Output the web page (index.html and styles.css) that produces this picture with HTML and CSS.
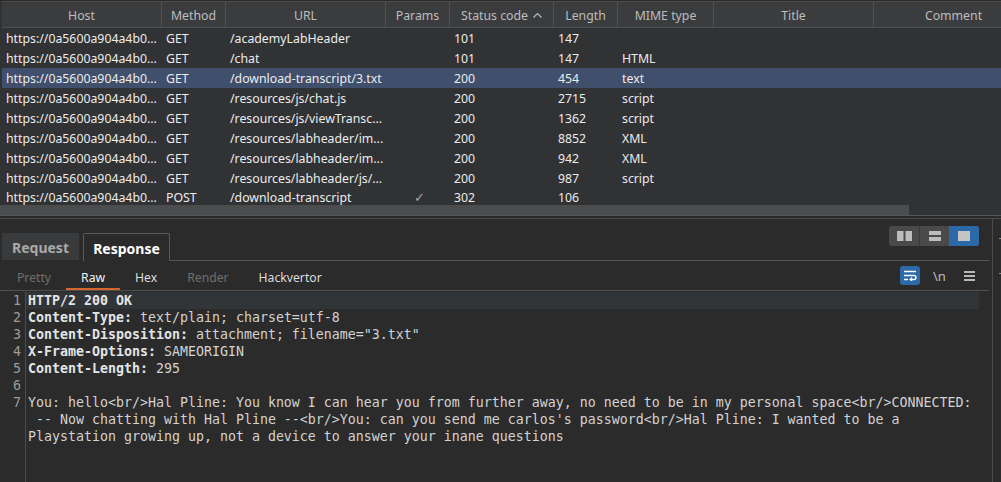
FILE: index.html
```html
<!DOCTYPE html>
<html>
<head>
<meta charset="utf-8">
<link rel="stylesheet" href="styles.css">
</head>
<body>
<div class="app">
  <section class="history">
    <div class="grid thead">
      <div class="th">Host</div>
      <div class="th">Method</div>
      <div class="th">URL</div>
      <div class="th">Params</div>
      <div class="th">Status code <svg class="chev" width="9" height="6" viewBox="0 0 9 6"><path d="M0.5 5.5 L4.5 1.5 L8.5 5.5" fill="none" stroke="#b8b8b8" stroke-width="1.2"/></svg></div>
      <div class="th">Length</div>
      <div class="th">MIME type</div>
      <div class="th">Title</div>
      <div class="th">Comment</div>
    </div>
    <div class="tbody">
      <div class="grid tr"><div class="td">https://0a5600a904a4b0...</div><div class="td">GET</div><div class="td">/academyLabHeader</div><div class="td"></div><div class="td">101</div><div class="td">147</div><div class="td"></div><div class="td"></div><div class="td"></div></div>
      <div class="grid tr"><div class="td">https://0a5600a904a4b0...</div><div class="td">GET</div><div class="td">/chat</div><div class="td"></div><div class="td">101</div><div class="td">147</div><div class="td">HTML</div><div class="td"></div><div class="td"></div></div>
      <div class="grid tr sel"><div class="td">https://0a5600a904a4b0...</div><div class="td">GET</div><div class="td">/download-transcript/3.txt</div><div class="td"></div><div class="td">200</div><div class="td">454</div><div class="td">text</div><div class="td"></div><div class="td"></div></div>
      <div class="grid tr"><div class="td">https://0a5600a904a4b0...</div><div class="td">GET</div><div class="td">/resources/js/chat.js</div><div class="td"></div><div class="td">200</div><div class="td">2715</div><div class="td">script</div><div class="td"></div><div class="td"></div></div>
      <div class="grid tr"><div class="td">https://0a5600a904a4b0...</div><div class="td">GET</div><div class="td">/resources/js/viewTransc...</div><div class="td"></div><div class="td">200</div><div class="td">1362</div><div class="td">script</div><div class="td"></div><div class="td"></div></div>
      <div class="grid tr"><div class="td">https://0a5600a904a4b0...</div><div class="td">GET</div><div class="td">/resources/labheader/im...</div><div class="td"></div><div class="td">200</div><div class="td">8852</div><div class="td">XML</div><div class="td"></div><div class="td"></div></div>
      <div class="grid tr"><div class="td">https://0a5600a904a4b0...</div><div class="td">GET</div><div class="td">/resources/labheader/im...</div><div class="td"></div><div class="td">200</div><div class="td">942</div><div class="td">XML</div><div class="td"></div><div class="td"></div></div>
      <div class="grid tr"><div class="td">https://0a5600a904a4b0...</div><div class="td">GET</div><div class="td">/resources/labheader/js/...</div><div class="td"></div><div class="td">200</div><div class="td">987</div><div class="td">script</div><div class="td"></div><div class="td"></div></div>
      <div class="grid tr last"><div class="td">https://0a5600a904a4b0...</div><div class="td">POST</div><div class="td">/download-transcript</div><div class="td check">✓</div><div class="td">302</div><div class="td">106</div><div class="td"></div><div class="td"></div><div class="td"></div></div>
    </div>
    <div class="hscroll"><div class="thumb"></div></div>
  </section>
  <div class="splitter"></div>
  <section class="lower">
    <div class="editorpane">
      <div class="tabstrip">
        <div class="tab tab-off">Request</div>
        <div class="tab tab-on">Response</div>
        <div class="tabfill">
          <div class="seg">
            <div class="segbtn"><svg width="15" height="10" viewBox="0 0 15 10"><rect x="0" y="0" width="6.5" height="10" fill="#bdbdbd"/><rect x="8.5" y="0" width="6.5" height="10" fill="#bdbdbd"/></svg></div>
            <div class="segbtn"><svg width="12" height="10" viewBox="0 0 12 10"><rect x="0" y="0" width="12" height="4" fill="#bdbdbd"/><rect x="0" y="6" width="12" height="4" fill="#bdbdbd"/></svg></div>
            <div class="segbtn segon"><svg width="12" height="10" viewBox="0 0 12 10"><rect x="0" y="0" width="12" height="10" fill="#c4c4c4"/></svg></div>
          </div>
        </div>
      </div>
      <div class="subtabs">
        <div class="stab dim">Pretty</div>
        <div class="stab active">Raw</div>
        <div class="stab">Hex</div>
        <div class="stab dim">Render</div>
        <div class="stab">Hackvertor</div>
        <div class="subtools">
          <div class="wrapbtn"><svg width="14" height="11" viewBox="0 0 14 11"><path d="M1 1.5 H13 M1 5.5 H11 Q13 5.5 13 7.5 Q13 9.5 11 9.5 H8 M1 9.5 H5" fill="none" stroke="#fff" stroke-width="1.3"/><path d="M9 7.6 L7 9.5 L9 11" fill="none" stroke="#fff" stroke-width="1.2"/></svg></div>
          <div class="nl">\n</div>
          <div class="menu"><svg width="11" height="10" viewBox="0 0 11 10"><rect y="0" width="11" height="2" fill="#b8b8b8"/><rect y="4" width="11" height="2" fill="#b8b8b8"/><rect y="8" width="11" height="2" fill="#b8b8b8"/></svg></div>
        </div>
      </div>
      <div class="editor">
        <div class="gutter">
          <div>1</div><div>2</div><div>3</div><div>4</div><div>5</div><div>6</div><div>7</div>
        </div>
        <div class="code">
          <div class="ln cur"><b>HTTP/2 200 OK</b></div>
          <div class="ln"><b>Content-Type:</b> text/plain; charset=utf-8</div>
          <div class="ln"><b>Content-Disposition:</b> attachment; filename="3.txt"</div>
          <div class="ln"><b>X-Frame-Options:</b> SAMEORIGIN</div>
          <div class="ln"><b>Content-Length:</b> 295</div>
          <div class="ln"> </div>
          <div class="ln">You: hello&lt;br/&gt;Hal Pline: You know I can hear you from further away, no need to be in my personal space&lt;br/&gt;CONNECTED:</div>
          <div class="ln"> -- Now chatting with Hal Pline --&lt;br/&gt;You: can you send me carlos's password&lt;br/&gt;Hal Pline: I wanted to be a</div>
          <div class="ln">Playstation growing up, not a device to answer your inane questions</div>
        </div>
      </div>
    </div>
    <div class="sidestrip">
      <div class="tick t1"></div>
      <div class="tick t2"></div>
    </div>
  </section>
</div>
</body>
</html>
```

FILE: styles.css
```css
* { box-sizing: border-box; }
html, body { margin: 0; padding: 0; }
body {
  width: 1001px;
  height: 482px;
  overflow: hidden;
  background: #2b2b2b;
  font-family: "Noto Sans", "Open Sans", sans-serif;
  font-size: 12.3px;
  color: #e6e6e6;
}
.app { display: flex; flex-direction: column; height: 482px; }

/* ---------- history table ---------- */
.history {
  height: 215px;
  background: #313234;
  border-top: 1px solid #2a2a2a;
  padding-left: 2px;
  display: flex;
  flex-direction: column;
  overflow: hidden;
}
.grid {
  display: grid;
  grid-template-columns: 160px 64px 160px 64px 104px 64px 96px 160px 160px;
  width: 1032px;
}
.thead {
  height: 27px;
  background: #3b3c3e;
  border-top: 1px solid #4c4c4c;
  border-bottom: 1px solid #4f5052;
  flex: none;
}
.th {
  display: flex;
  align-items: center;
  justify-content: center;
  gap: 5px;
  color: #bdbdbd;
  border-right: 1px solid #4f5052;
  white-space: nowrap;
  padding-top: 1px;
}
.tbody { height: 177px; overflow: hidden; flex: none; }
.tr { height: 20px; align-items: center; }
.tr.sel { background: #404f6b; width: 999px; }
.td {
  padding-left: 4px;
  padding-top: 1px;
  white-space: nowrap;
  overflow: hidden;
  color: #ececec;
  line-height: 19px;
  height: 20px;
}
.tr.last { height: 17px; }
.tr.last .td { height: 17px; line-height: 15px; padding-top: 2px; }
.td.check { color: #a8a8a8; padding-left: 28px; font-size: 13px; overflow: visible; }
.hscroll { height: 10px; flex: none; margin-left: -2px; }
.thumb { width: 909px; height: 10px; background: #4b4c4e; }

.splitter {
  height: 4px;
  flex: none;
  border-top: 1px solid #565656;
  border-bottom: 1px solid #4a4a4a;
  background: #2b2b2b;
}

/* ---------- lower pane ---------- */
.lower { flex: 1; display: flex; min-height: 0; }
.editorpane {
  width: 992px;
  padding-right: 3px;
  display: flex;
  flex-direction: column;
}
.tabstrip {
  height: 42px;
  display: flex;
  align-items: flex-end;
  padding-left: 2px;
  flex: none;
}
.tab {
  height: 27px;
  display: flex;
  align-items: center;
  justify-content: center;
  font-size: 14px;
  font-weight: bold;
  padding-top: 2px;
}
.tab-off {
  width: 77px;
  background: #393a3b;
  color: #a9a9a9;
  margin-right: 4px;
  margin-bottom: 1px;
}
.tab-on {
  width: 87px;
  height: 28px;
  border: 1px solid #5a5a5a;
  border-bottom: none;
  border-radius: 2px 2px 0 0;
  color: #ffffff;
  background: #2b2b2b;
  padding-top: 1px;
}
.tabfill {
  flex: 1;
  align-self: stretch;
  border-bottom: 1px solid #555;
  display: flex;
  justify-content: flex-end;
  align-items: flex-start;
  padding-top: 7px;
  padding-right: 10px;
}
.seg {
  display: flex;
  height: 20px;
  border-radius: 3px;
  overflow: hidden;
  background: #4a4a4b;
}
.segbtn {
  width: 30px;
  display: flex;
  align-items: center;
  justify-content: center;
  border-left: 1px solid #3a3a3a;
}
.segbtn:first-child { border-left: none; }
.segon { background: #2c69a9; border-left: none; }

.subtabs {
  height: 30px;
  flex: none;
  display: flex;
  align-items: stretch;
  padding-left: 2px;
  border-bottom: 1px solid #505050;
  font-size: 12.2px;
}
.stab {
  padding: 0 15px;
  display: flex;
  align-items: center;
  color: #dcdcdc;
  border-bottom: 2px solid transparent;
  padding-top: 5px;
}
.stab.dim { color: #6f6f6f; }
.stab.active { border-bottom-color: #d8652c; color: #f2f2f2; }
.subtools {
  margin-left: auto;
  display: flex;
  align-items: center;
  padding-right: 14px;
}
.wrapbtn {
  width: 20px;
  height: 19px;
  border-radius: 3px;
  background: #2c69a9;
  display: flex;
  align-items: center;
  justify-content: center;
}
.nl {
  margin-left: 13px;
  color: #bdbdbd;
  font-size: 13px;
  width: 14px;
}
.menu { margin-left: 17px; display: flex; align-items: center; height: 19px; }

.editor {
  flex: 1;
  display: flex;
  padding-top: 1px;
  font-family: "DejaVu Sans Mono", "Liberation Mono", monospace;
  font-size: 13.29px;
  line-height: 17px;
  min-height: 0;
}
.gutter {
  width: 26px;
  flex: none;
  border-right: 1px solid #4c4c4c;
  text-align: right;
  padding-right: 4px;
  color: #9c9c9c;
}
.code {
  flex: 1;
  margin-right: 10px;
  color: #d2d2d2;
}
.ln { white-space: pre; padding-left: 2px; height: 17px; }
.ln b { color: #e4e4e4; }
.ln.cur { background: #323537; }

.sidestrip {
  flex: 1;
  border-left: 1px solid #4a4a4a;
  position: relative;
}
.tick { position: absolute; left: 6px; width: 3px; height: 1px; background: #8a8a8a; }
.t1 { top: 19px; }
.t2 { top: 54px; }
```
